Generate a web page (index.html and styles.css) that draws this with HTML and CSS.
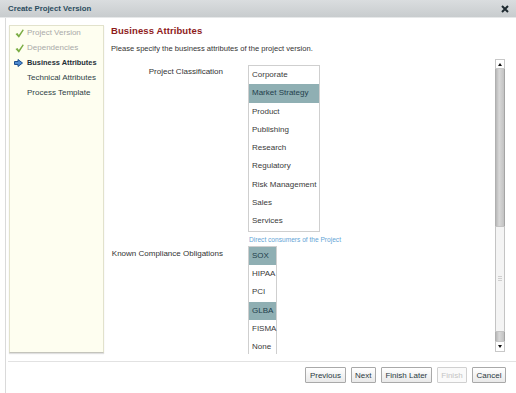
FILE: index.html
```html
<!DOCTYPE html>
<html lang="en">
<head>
  <meta charset="UTF-8" />
  <title>Create Project Version</title>
  <link rel="stylesheet" href="styles.css">
</head>
<body>
  <div class="dialog">
    <!-- Title bar -->
    <div class="titlebar">
      <span class="title">Create Project Version</span>
      <svg class="close" width="8" height="8" viewBox="0 0 8 8">
        <path d="M1 1 L7 7 M7 1 L1 7" stroke="#1e2a30" stroke-width="2" />
      </svg>
    </div>

    <div class="frame">
      <div class="body">
        <!-- Wizard steps -->
        <ul class="steps">
          <li class="step done">
            <svg class="check" width="9" height="9" viewBox="0 0 9 9"><path d="M0.5 5 L2.5 4 L3.8 6 L7.8 0.3 L8.8 1.2 L3.9 8.8 Z" fill="#7aac44" /></svg>
            Project Version
          </li>
          <li class="step done">
            <svg class="check" width="9" height="9" viewBox="0 0 9 9"><path d="M0.5 5 L2.5 4 L3.8 6 L7.8 0.3 L8.8 1.2 L3.9 8.8 Z" fill="#7aac44" /></svg>
            Dependencies
          </li>
          <li class="step current">
            <svg class="arrow" width="9" height="8" viewBox="0 0 9 8"><path d="M0.5 2.5 H4 V0.5 L8.5 4 L4 7.5 V5.5 H0.5 Z" fill="#4f8ad0" stroke="#1d4f8e" stroke-width="1" /></svg>
            Business Attributes
          </li>
          <li class="step">Technical Attributes</li>
          <li class="step">Process Template</li>
        </ul>

        <!-- Step content -->
        <div class="main">
          <h1>Business Attributes</h1>
          <p class="intro">Please specify the business attributes of the project version.</p>

          <div class="scroller">
            <div class="form">
              <div class="field">
                <label class="field-label">Project Classification</label>
                <div class="field-input">
                  <ul class="listbox wide">
                    <li>Corporate</li>
                    <li class="selected">Market Strategy</li>
                    <li>Product</li>
                    <li>Publishing</li>
                    <li>Research</li>
                    <li>Regulatory</li>
                    <li>Risk Management</li>
                    <li>Sales</li>
                    <li>Services</li>
                  </ul>
                  <div class="hint">Direct consumers of the Project</div>
                </div>
              </div>
              <div class="field">
                <label class="field-label">Known Compliance Obligations</label>
                <div class="field-input">
                  <ul class="listbox narrow">
                    <li class="selected">SOX</li>
                    <li>HIPAA</li>
                    <li>PCI</li>
                    <li class="selected">GLBA</li>
                    <li>FISMA</li>
                    <li>None</li>
                  </ul>
                </div>
              </div>
            </div>

            <!-- Scrollbar -->
            <div class="scrollbar">
              <div class="sb-btn"><span class="sb-tri up"></span></div>
              <div class="sb-track"></div>
              <div class="sb-thumb"><span class="grip"></span></div>
              <div class="sb-track short"></div>
              <div class="sb-btn"><span class="sb-tri down"></span></div>
            </div>
          </div>
        </div>
      </div>

      <!-- Buttons -->
      <div class="footer">
        <button class="btn">Previous</button>
        <button class="btn">Next</button>
        <button class="btn">Finish Later</button>
        <button class="btn" disabled>Finish</button>
        <button class="btn">Cancel</button>
      </div>
    </div>
  </div>
</body>
</html>
```

FILE: styles.css
```css
/* Global */
* { box-sizing: border-box; margin: 0; padding: 0; }
body {
  font-family: "Liberation Sans", Arial, sans-serif;
  font-size: 8px;
  color: #333;
  background: #ffffff;
}
ul { list-style: none; }

/* Dialog */
.dialog {
  width: 516px;
  height: 393px;
  display: flex;
  flex-direction: column;
  background: #fff;
}
.titlebar {
  height: 18px;
  flex: none;
  display: flex;
  align-items: center;
  justify-content: space-between;
  padding: 0 6px 0 8px;
  background: linear-gradient(#dadddf, #c8ccce);
  border-bottom: 1px solid #e6e8e9;
}
.title {
  font-weight: bold;
  font-size: 7.8px;
  color: #2b4c5e;
}
.close { display: block; margin-right: 1px; }

.frame {
  flex: 1;
  display: flex;
  flex-direction: column;
  margin-left: 5px;
  border-left: 1px solid #dadada;
}
.body {
  height: 343px;
  display: flex;
  padding: 7px 0 0 3px;
}

/* Wizard steps */
.steps {
  width: 95px;
  height: 328px;
  flex: none;
  padding-top: 0;
  background: #fefef0;
  border: 1px solid #e2e2cc;
  border-bottom-color: #c4c4bc;
  box-shadow: 0 1px 1px rgba(0,0,0,0.12);
}
.step {
  position: relative;
  height: 14.9px;
  line-height: 14.9px;
  padding-left: 17px;
  color: #2e3e46;
  white-space: nowrap;
}
.step.done { color: #a9a9a9; }
.step.current { font-weight: bold; font-size: 7.4px; color: #1f2f38; }
.step svg {
  position: absolute;
  left: 5px;
  top: 3px;
}
.step .arrow { left: 4px; top: 3.5px; }

/* Main column */
.main {
  flex: 1;
  display: flex;
  flex-direction: column;
  margin-left: 7px;
  min-width: 0;
}
.main h1 {
  font-size: 9.5px;
  line-height: 11px;
  font-weight: bold;
  color: #8e1b1b;
  letter-spacing: 0.1px;
}
.intro {
  margin-top: 8px;
  line-height: 10px;
  font-size: 7.6px;
  color: #333;
}
.scroller {
  margin-top: 3px;
  height: 297px;
  display: flex;
  overflow: hidden;
}
.form {
  flex: 1;
  padding-top: 8px;
}
.field { display: flex; }
.field + .field { margin-top: 1px; }
.field-label {
  width: 112px;
  margin-right: 25px;
  padding-top: 2px;
  text-align: right;
  line-height: 10px;
  color: #333;
}
.field + .field .field-label { padding-top: 3px; }
.field-input { display: flex; flex-direction: column; }

.listbox {
  border: 1px solid #cfcfcf;
  background: #fff;
}
.listbox.wide { width: 72px; }
.listbox.narrow { width: 29px; }
.listbox li {
  height: 18.3px;
  line-height: 18.3px;
  padding-left: 3px;
  white-space: nowrap;
  color: #3a3a3a;
}
.listbox li.selected {
  background: #8fafb3;
  color: #23404c;
}
.hint {
  margin: 3px 0 1px 1px;
  font-size: 6.6px;
  line-height: 9px;
  color: #63a5d6;
  white-space: nowrap;
}

/* Scrollbar */
.scrollbar {
  width: 10px;
  flex: none;
  margin: 2px 11px 2px 0;
  display: flex;
  flex-direction: column;
}
.sb-btn {
  height: 10px;
  display: flex;
  align-items: center;
  justify-content: center;
  background: #fff;
  border: 1px solid #c8c8c8;
}
.sb-btn:last-child { height: 11px; }
.sb-tri {
  width: 0;
  height: 0;
  border-left: 2px solid transparent;
  border-right: 2px solid transparent;
}
.sb-tri.up { border-bottom: 3px solid #111; }
.sb-tri.down { border-top: 3px solid #111; }
.sb-track {
  height: 157px;
  background: linear-gradient(to right, #b8b8b8, #d8d8d8 40%, #c2c2c2);
  border-left: 1px solid #b0b0b0;
  border-right: 1px solid #a4a4a4;
}
.sb-track.short { height: 9px; }
.sb-thumb {
  height: 106px;
  display: flex;
  align-items: center;
  justify-content: center;
  background: #f4f4f4;
  border: 1px solid #c4c4c4;
}
.grip {
  width: 4px;
  height: 6px;
  background: repeating-linear-gradient(#cfcfcf 0 1px, transparent 1px 2px);
}

/* Footer buttons */
.footer {
  flex: 1;
  display: flex;
  justify-content: flex-end;
  align-items: flex-start;
  gap: 5px;
  margin-left: 2px;
  padding: 5px 10px 0 0;
  border-top: 1px solid #e2e2e2;
}
.btn {
  height: 16px;
  padding: 0 3.5px;
  font-family: "Liberation Sans", Arial, sans-serif;
  font-size: 8px;
  color: #2b3a42;
  background: linear-gradient(#ffffff, #e9e9e9);
  border: 1px solid #a9a9a9;
  border-radius: 1px;
}
.btn:disabled {
  color: #c4c4c4;
  border-color: #d0d0d0;
  background: #fafafa;
}
```
